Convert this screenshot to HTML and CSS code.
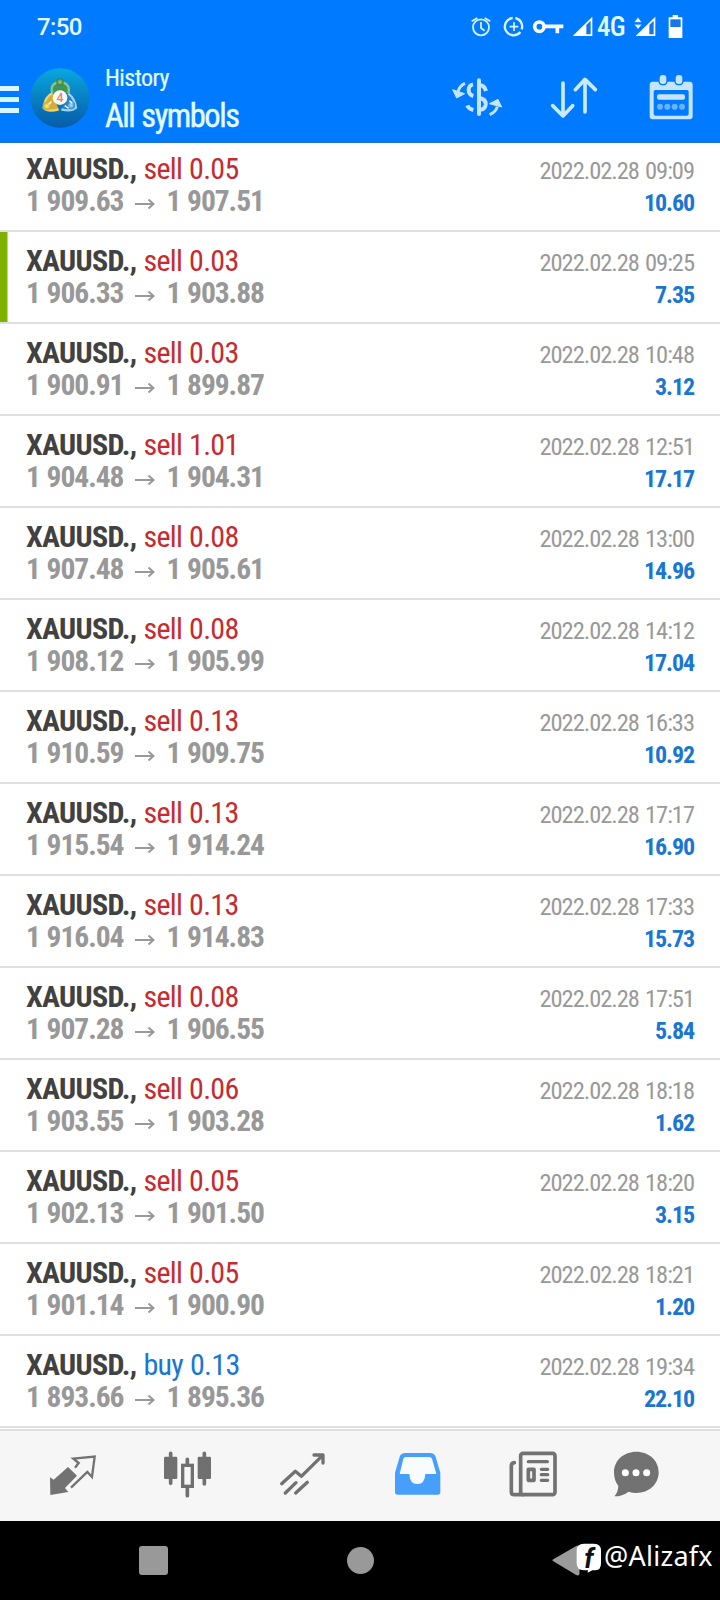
FILE: index.html
```html
<!DOCTYPE html>
<html lang="en">
<head>
<meta charset="utf-8">
<title>History</title>
<link rel="stylesheet" href="styles.css">
</head>
<body>
<header class="header">
  <div class="status">
    <span class="clock">7:50</span>
    <svg class="st alarm" viewBox="120 36 69 90"><g fill="none" stroke="#d5f0ff" stroke-width="5.500"><circle cx="153" cy="82" r="24"/><path d="M153 66v18l11 8M125 64l17-10M181 64l-17-10"/></g></svg>
    <svg class="st saver" viewBox="219 36 66 90"><g fill="none" stroke="#dcf4ff" stroke-width="7"><path d="M248 54A26 26 0 1 0 271 96M256 54A26 26 0 0 1 275 88"/><path stroke-width="5" d="M252 67v26M239 80h26"/></g></svg>
    <svg class="st key" viewBox="306 36 99 90"><g fill="none" stroke="#fff"><circle cx="328" cy="80" r="14" stroke-width="11"/><path d="M345 79h55M382 80v20" stroke-width="11"/></g></svg>
    <svg class="st sig" viewBox="426 36 66 90"><path d="M428 108L487 50V108Z" fill="#fff"/><path d="M469 75L482 62V103H469Z" fill="#1676e8"/></svg>
    <span class="net">4G</span>
    <svg class="st sig2" viewBox="609 36 72 90"><path d="M617 108L676 50V108Z" fill="#fff"/><path d="M658 75L671 62V103H658Z" fill="#1676e8"/><path d="M624 52l12 15h-24zM624 88l12-15h-24z" fill="#fff" stroke="#007bff" stroke-width="2"/></svg>
    <svg class="st batt" viewBox="711 36 51 90"><path d="M716 52h12v-7h16v7h13v62h-41z" fill="#fff"/><path d="M721 58h31v23h-31z" fill="#1676e8"/></svg>
  </div>
  <div class="bar">
    <div class="menu"><i></i><i></i><i></i></div>
    <svg class="logo" viewBox="90 204 180 180">
      <defs>
        <linearGradient id="lg" x1="0" y1="0" x2="0" y2="1"><stop offset="0" stop-color="#08a8de"/><stop offset=".5" stop-color="#0880c4"/><stop offset="1" stop-color="#075ca8"/></linearGradient>
        <radialGradient id="gr"><stop offset="0" stop-color="#a6d284"/><stop offset="1" stop-color="#2f7d43"/></radialGradient>
        <radialGradient id="ye"><stop offset="0" stop-color="#fff08a"/><stop offset="1" stop-color="#c9a02c"/></radialGradient>
        <radialGradient id="bl"><stop offset="0" stop-color="#b5e6ff"/><stop offset="1" stop-color="#2b82ca"/></radialGradient>
      </defs>
      <circle cx="180" cy="294" r="89" fill="url(#lg)"/>
      <g stroke-width="7" stroke-linejoin="round">
        <path d="M157 280Q148 250 180 246Q213 250 205 280" fill="#3f965a" stroke="#8cc48a"/>
        <path d="M157 280Q136 288 131 323Q143 337 176 328" fill="#d6ac35" stroke="#efd364"/>
        <path d="M205 281Q224 295 228 323Q214 336 184 328" fill="#2480c9" stroke="#9bd3f0"/>
      </g>
      <circle cx="180" cy="246" r="11" fill="url(#gr)"/><circle cx="141" cy="318" r="13" fill="url(#ye)"/><circle cx="213" cy="316" r="12" fill="url(#bl)"/>
      <path d="M194 317l12 8M208 302l9 8M154 305l-8 8" stroke="#e0f5ff" stroke-width="5"/>
      <circle cx="180" cy="293" r="22" fill="#f5faf8"/>
      <text x="180" y="306" class="four" text-anchor="middle">4</text>
    </svg>
    <div class="titles"><div class="t1">History</div><div class="t2">All symbols</div></div>
    <svg class="act" viewBox="60 219 180 150"><g fill="none" stroke="#c4e4ff" stroke-width="12"><path stroke-width="12" stroke-linecap="round" d="M147 241v101"/><path d="M129 253Q116 256 116 270Q116 284 130 288M112 316Q116 327 130 330"/><path d="M150 256Q164 257 168 273M150 294Q168 298 167 314Q165 328 150 329"/><path stroke-width="9" d="M105 250Q89 257 84 275M179 344Q197 337 202 320"/></g><path d="M68 269l36 12-24 13zM215 321l-37-10 26-13z" fill="#c4e4ff" stroke="#c4e4ff" stroke-width="3" stroke-linejoin="round"/></svg>
    <svg class="act" viewBox="360 219 180 150"><g fill="none" stroke="#c9eaff" stroke-width="11" stroke-linecap="round" stroke-linejoin="round"><path d="M399 249v99M368 317l31 31 29-31M465 336V239M436 269l29-31 31 31"/></g></svg>
    <svg class="act cal" viewBox="651 219 180 150"><path fill="#c4e4ff" fill-rule="evenodd" d="M668 245h17q3 11 14 11t14-11h20q3 11 14 11t14-11h18q9 0 9 9v95q0 9-9 9H668q-9 0-9-9v-95q0-9 9-9zM676 270q-5 0-5 5v66q0 6 6 6h93q6 0 6-6v-66q0-5-5-5z"/><rect x="686" y="222" width="26" height="33" rx="12" fill="#007bff"/><rect x="734" y="222" width="26" height="33" rx="12" fill="#007bff"/><rect x="689" y="225" width="20" height="27" rx="9" fill="#c4e4ff"/><rect x="737" y="225" width="20" height="27" rx="9" fill="#c4e4ff"/><rect x="681" y="283" width="84" height="16" rx="6" fill="#c4e4ff"/><g fill="#68b2ff"><circle cx="690" cy="320" r="9"/><circle cx="712" cy="320" r="9"/><circle cx="734" cy="320" r="9"/><circle cx="756" cy="320" r="9"/></g></svg>
  </div>
</header>
<main class="list" id="list"></main>
<nav class="tabs">
  <svg viewBox="129 357 180 150"><path d="M204 411l27 26-36 37 10 12-54 9-1-53 11 7z" fill="#727272"/><path d="M213 473l49-47 14 15 8-61-64 6 16 13-11 14" fill="none" stroke="#727272" stroke-width="7"/></svg>
  <svg viewBox="474 357 180 150"><g fill="none" stroke="#707070" stroke-width="11" stroke-linecap="round"><path d="M512 370v90M613 370v92M562 388v15M562 472v25"/></g><rect x="492" y="380" width="40" height="67" rx="4" fill="#707070"/><rect x="593" y="380" width="40" height="67" rx="4" fill="#707070"/><rect x="548" y="406" width="29" height="63" fill="#f6f6f6" stroke="#707070" stroke-width="10"/></svg>
  <svg viewBox="819 357 180 150"><g fill="none" stroke="#717171" stroke-width="10" stroke-linecap="round" stroke-linejoin="round"><path d="M845 461l41-37 18 15 63-62M942 375h27v24M856 489l32-31M887 489l35-32"/></g></svg>
  <svg viewBox="84 357 180 150"><path d="M134 369h78q10 0 14 8l15 51v58q0 8-8 8H113q-8 0-8-8v-58l15-51q4-8 14-8z" fill="#479ffc"/><path d="M136 381h73q5 0 7 5l13 46h-33q-1 30-24 30t-24-30h-29l11-46q2-5 6-5z" fill="#f8fbff"/></svg>
  <svg viewBox="429 357 180 150"><g fill="none" stroke="#727272" stroke-width="11" stroke-linejoin="round"><rect x="482" y="370" width="103" height="124" rx="7"/><path stroke-linecap="round" d="M463 398q-9 1-9 10v77q0 9 9 9h24"/><path stroke-linecap="round" stroke-width="10" d="M505 395h57M544 418h19M544 434h19M544 451h19"/><rect x="505" y="418" width="17" height="33"/></g></svg>
  <svg class="chat" viewBox="738 357 180 150"><path d="M829 365c38 0 67 26 67 62s-29 62-67 62q-12 0-23-4-19 14-43 14 11-11 12-31-13-17-13-41c0-36 29-62 67-62z" fill="#727272"/><g fill="#fff"><circle cx="796" cy="428" r="10.500"/><circle cx="828" cy="428" r="10.500"/><circle cx="860" cy="428" r="10.500"/></g></svg>
</nav>
<footer class="sys">
  <div class="recent"></div>
  <div class="home"></div>
  <svg class="back" viewBox="63 90 153 120"><path d="M70 151l70-41q6-3 6 3v77q0 6-6 3z" fill="#9b9b9b" stroke="#9b9b9b" stroke-width="5" stroke-linejoin="round"/><path d="M162 101h30q21 0 21 21v38q0 21-17 21h-9l-14 7 1-7h-12q-22 0-22-21v-38q0-21 22-21z" fill="#fff"/><text x="177" y="174" class="fb" text-anchor="middle">f</text></svg>
  <span class="handle">@Alizafx</span>
</footer>
<script src="app.js"></script>
</body>
</html>
```
FILE: styles.css
```css
* { box-sizing: border-box; }
body { margin: 0; width: 720px; height: 1600px; overflow: hidden; background: #fff; display: flex; flex-direction: column; font-family: "Roboto Condensed", Roboto, sans-serif; font-stretch: 75%; }
svg { display: block; flex: none; }
.header { height: 143px; background: #007bff; border-bottom: 1px solid #1873cf; color: #e4fbff; flex: none; }
.status { height: 52px; display: flex; align-items: flex-start; padding: 12px 36px 0 37px; }
.clock { font: 500 24px/30px Roboto, sans-serif; font-stretch: 100%; letter-spacing: -0.6px; width: 433px; }
.st { height: 30px; }
.alarm { width: 23px; margin-right: 10px; }
.saver { width: 22px; margin-right: 7px; }
.key { width: 33px; margin-right: 7px; }
.sig { width: 22px; margin-right: 3px; }
.net { font-size: 27px; font-weight: 500; line-height: 30px; letter-spacing: -0.8px; width: 36px; }
.sig2 { width: 24px; margin-right: 10px; }
.batt { width: 17px; }
.bar { height: 90px; display: flex; align-items: flex-start; }
.menu { width: 19px; margin: 34px 11px 0 0; display: flex; flex-direction: column; gap: 6px; }
.menu i { height: 5px; background: #d8f6ff; }
.logo { width: 60px; height: 60px; margin-top: 16px; }
.four { font: 500 37px Roboto, sans-serif; fill: #ee8262; }
.titles { width: 345px; margin: 12px 0 0 15px; white-space: nowrap; }
.t1 { font-size: 24px; line-height: 28px; letter-spacing: -0.55px; -webkit-text-stroke: 0.2px; }
.t2 { font-size: 32.500px; line-height: 48px; letter-spacing: -1.450px; word-spacing: 1px; -webkit-text-stroke: 0.4px; }
.act { width: 60px; height: 50px; margin: 21px 40px 0 0; }
.act:nth-child(5) { margin-right: 37px; }
.cal { margin-right: 0; }
.list { flex: none; height: 1286px; display: flex; flex-direction: column; justify-content: flex-end; padding-bottom: 1px; overflow: hidden; }
.row { height: 92px; flex: none; border-bottom: 2px solid #e0e0e0; padding: 13px 26px 0 26px; display: flex; justify-content: space-between; }
.row.first { height: 89px; padding-top: 10px; }
.row.marked { box-shadow: inset 7.500px 0 0 #7fb100; }
.sym { font-size: 30px; line-height: 32px; font-weight: 700; letter-spacing: -0.700px; word-spacing: 0.7px; color: #414141; white-space: nowrap; }
.sym span { font-weight: 400; color: #c52b2f; }
.sym .buy { color: #1976d2; }
.price { font-size: 29.500px; line-height: 32px; font-weight: 700; letter-spacing: -1.050px; word-spacing: 1px; color: #989898; white-space: nowrap; display: flex; }
.arrow { width: 43px; flex: none; height: 32px; }
.right { text-align: right; white-space: nowrap; }
.date { font-size: 24.500px; line-height: 32px; letter-spacing: -1.020px; word-spacing: 1.5px; color: #999; padding-top: 2px; }
.profit { font-size: 24px; line-height: 32px; font-weight: 700; letter-spacing: -1.100px; color: #1976d2; }
.tabs { flex: none; height: 92px; background: #f6f6f6; border-top: 2px solid #e0e0e0; display: flex; gap: 55px; padding: 18px 0 0 43px; }
.tabs svg { width: 60px; height: 50px; }
.tabs .chat { margin-left: -12px; }
.sys { height: 79px; background: #000; display: flex; align-items: flex-start; }
.recent { width: 29px; height: 29px; border-radius: 3px; background: #999; margin: 25px 0 0 139px; }
.home { width: 27px; height: 27px; border-radius: 50%; background: #999; margin: 26px 0 0 179px; }
.back { width: 51px; height: 40px; margin: 19px 0 0 177px; overflow: visible; }
.fb { font: italic 700 80px Roboto, sans-serif; fill: #111; }
.handle { font: 27px/40px "Noto Sans", sans-serif; font-stretch: 100%; letter-spacing: 0.250px; color: #fff; margin: 15px 0 0 2px; }
```
FILE: app.js
```javascript
const deals = [
  ["sell 0.05", "1 909.63", "1 907.51", "09:09", "10.60"],
  ["sell 0.03", "1 906.33", "1 903.88", "09:25", "7.35"],
  ["sell 0.03", "1 900.91", "1 899.87", "10:48", "3.12"],
  ["sell 1.01", "1 904.48", "1 904.31", "12:51", "17.17"],
  ["sell 0.08", "1 907.48", "1 905.61", "13:00", "14.96"],
  ["sell 0.08", "1 908.12", "1 905.99", "14:12", "17.04"],
  ["sell 0.13", "1 910.59", "1 909.75", "16:33", "10.92"],
  ["sell 0.13", "1 915.54", "1 914.24", "17:17", "16.90"],
  ["sell 0.13", "1 916.04", "1 914.83", "17:33", "15.73"],
  ["sell 0.08", "1 907.28", "1 906.55", "17:51", "5.84"],
  ["sell 0.06", "1 903.55", "1 903.28", "18:18", "1.62"],
  ["sell 0.05", "1 902.13", "1 901.50", "18:20", "3.15"],
  ["sell 0.05", "1 901.14", "1 900.90", "18:21", "1.20"],
  ["buy 0.13", "1 893.66", "1 895.36", "19:34", "22.10"]
];
document.getElementById("list").innerHTML = deals.map(([side, open, close, time, profit], i) => `
  <section class="row${i === 0 ? " first" : ""}${i === 1 ? " marked" : ""}">
    <div>
      <div class="sym">XAUUSD., <span class="${side.split(" ")[0]}">${side}</span></div>
      <div class="price"><span>${open}</span><svg class="arrow" viewBox="0 0 43 32"><path d="M12 19h18.500M25.500 14.500l5 4.500-5 4.500" fill="none" stroke="#999" stroke-width="2"/></svg><span>${close}</span></div>
    </div>
    <div class="right"><div class="date">2022.02.28 ${time}</div><div class="profit">${profit}</div></div>
  </section>`).join("");
```
